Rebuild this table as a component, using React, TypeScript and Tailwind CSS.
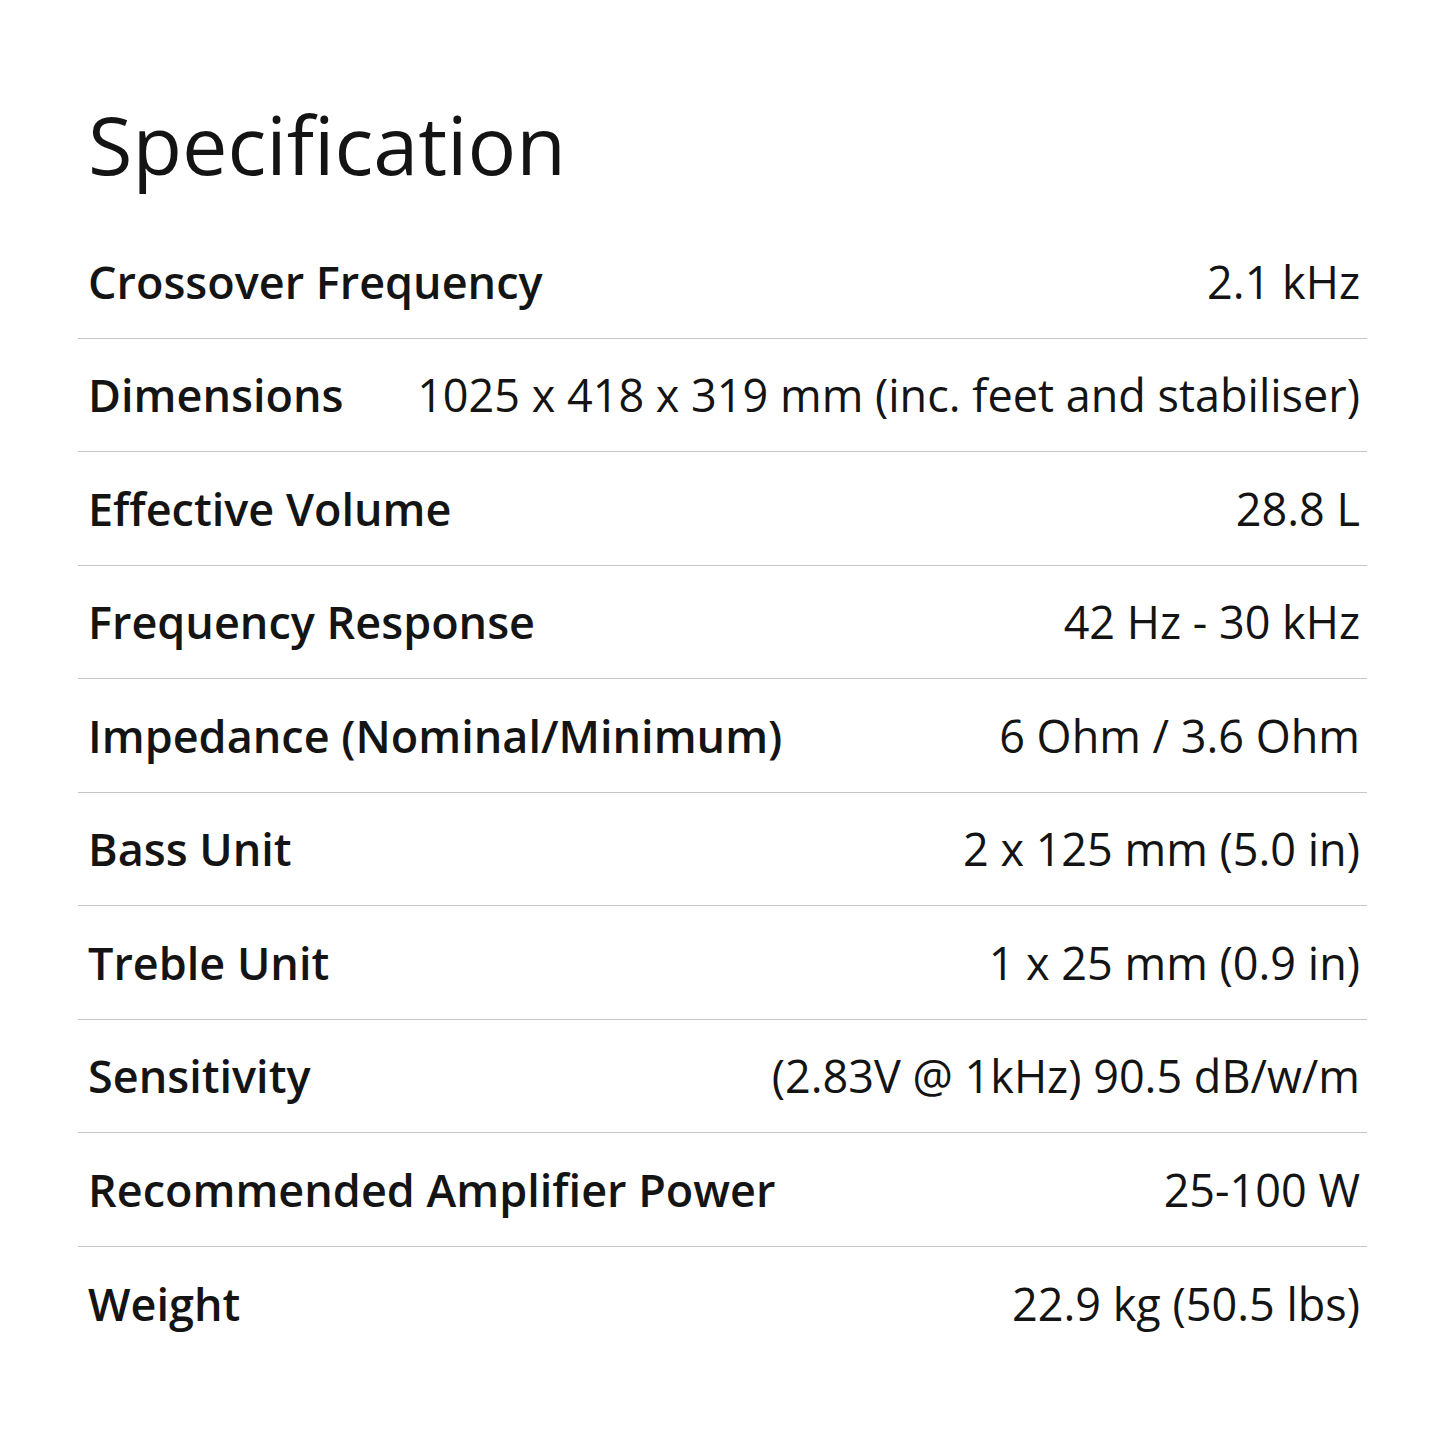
/* Linhas da tabela de especificações */
const specs: [string, string][] = [
  ["Crossover Frequency", "2.1 kHz"],
  ["Dimensions", "1025 x 418 x 319 mm (inc. feet and stabiliser)"],
  ["Effective Volume", "28.8 L"],
  ["Frequency Response", "42 Hz - 30 kHz"],
  ["Impedance (Nominal/Minimum)", "6 Ohm / 3.6 Ohm"],
  ["Bass Unit", "2 x 125 mm (5.0 in)"],
  ["Treble Unit", "1 x 25 mm (0.9 in)"],
  ["Sensitivity", "(2.83V @ 1kHz) 90.5 dB/w/m"],
  ["Recommended Amplifier Power", "25-100 W"],
  ["Weight", "22.9 kg (50.5 lbs)"],
];

export default function App() {
  return (
    <div className="w-[1445px] h-[1445px] bg-white text-[#141414] font-['Open_Sans','Noto_Sans',sans-serif] px-[78px] pt-[94px]">
      {/* Título */}
      <h1 className="pl-[10px] h-[131px] text-[81px] leading-[100px] font-normal">
        Specification
      </h1>

      {/* Tabela */}
      <div className="flex flex-col">
        {specs.map(([label, value], i) => (
          <div
            key={label}
            className={`flex items-center justify-between h-[113.5px] pl-[10px] pr-[7px] ${
              i < specs.length - 1 ? "border-b border-[#c6c6c6]" : ""
            }`}
          >
            <span className="text-[45px] font-semibold whitespace-nowrap">{label}</span>
            <span className="text-[45px] font-normal whitespace-nowrap">{value}</span>
          </div>
        ))}
      </div>
    </div>
  );
}
